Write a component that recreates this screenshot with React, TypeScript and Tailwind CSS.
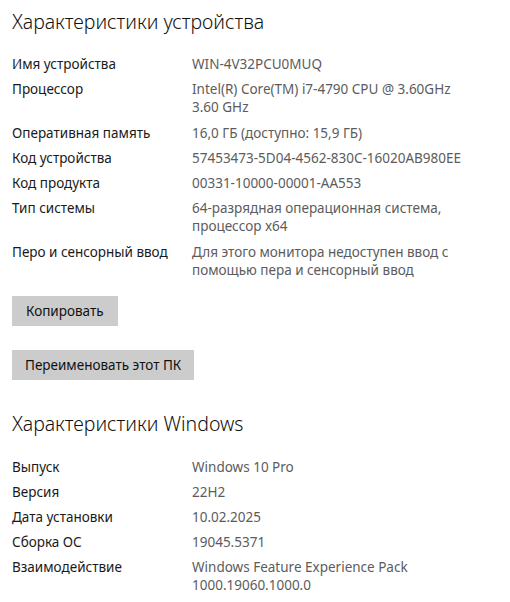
import React from "react";

const font = { fontFamily: '"Noto Sans", "Open Sans", sans-serif' };

type Row = { label: string; value: string[] };

const device: Row[] = [
  { label: "Имя устройства", value: ["WIN-4V32PCU0MUQ"] },
  { label: "Процессор", value: ["Intel(R) Core(TM) i7-4790 CPU @ 3.60GHz", "3.60 GHz"] },
  { label: "Оперативная память", value: ["16,0 ГБ (доступно: 15,9 ГБ)"] },
  { label: "Код устройства", value: ["57453473-5D04-4562-830C-16020AB980EE"] },
  { label: "Код продукта", value: ["00331-10000-00001-AA553"] },
  { label: "Тип системы", value: ["64-разрядная операционная система,", "процессор x64"] },
  { label: "Перо и сенсорный ввод", value: ["Для этого монитора недоступен ввод с", "помощью пера и сенсорный ввод"] },
];

const windows: Row[] = [
  { label: "Выпуск", value: ["Windows 10 Pro"] },
  { label: "Версия", value: ["22H2"] },
  { label: "Дата установки", value: ["10.02.2025"] },
  { label: "Сборка ОС", value: ["19045.5371"] },
  { label: "Взаимодействие", value: ["Windows Feature Experience Pack", "1000.19060.1000.0"] },
];

function Rows({ rows, gap }: { rows: Row[]; gap: string }) {
  return (
    <div className={`flex flex-col ${gap}`}>
      {rows.map((r) => (
        <div key={r.label} className="flex text-[13.5px] leading-[18px]">
          <div className="w-[180px] shrink-0 text-[#1a1a1a]">{r.label}</div>
          <div className="text-[#5c5c5c]">
            {r.value.map((v) => (
              <div key={v}>{v}</div>
            ))}
          </div>
        </div>
      ))}
    </div>
  );
}

export default function App() {
  return (
    <div className="w-[510px] h-[602px] bg-white overflow-hidden px-3 pt-[8px]" style={font}>
      <h1 className="text-[19.5px] leading-[28px] text-[#111] font-light">Характеристики устройства</h1>
      <div className="mt-[19px]">
        <Rows rows={device} gap="gap-[7.3px]" />
      </div>
      <div className="mt-[17px] flex flex-col items-start gap-[24px]">
        <button className="h-[30px] px-[14px] bg-[#cccccc] text-[13.5px] text-[#111]">Копировать</button>
        <button className="h-[30px] px-[13px] bg-[#cccccc] text-[13.5px] text-[#111]">Переименовать этот ПК</button>
      </div>
      <h1 className="mt-[30px] text-[19.5px] leading-[28px] text-[#111] font-light">Характеристики Windows</h1>
      <div className="mt-[20px]">
        <Rows rows={windows} gap="gap-[7px]" />
      </div>
    </div>
  );
}
